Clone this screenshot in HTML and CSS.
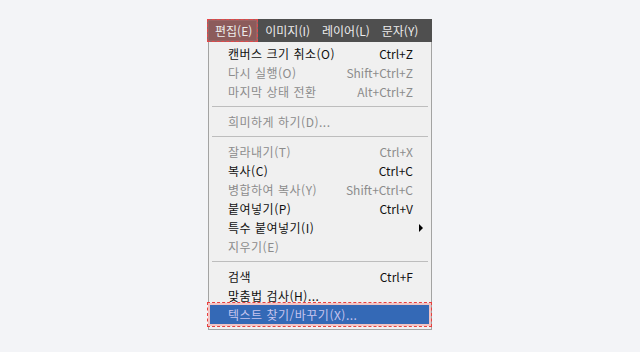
FILE: index.html
```html
<!DOCTYPE html>
<html lang="ko">
<head>
    <meta charset="UTF-8">
    <meta name="viewport" content="width=device-width, initial-scale=1.0">
    <title>편집 메뉴</title>
    <link rel="stylesheet" href="styles.css">
</head>
<body>

    <div class="menu-wrap">
        <div class="menubar">
            <span class="menubar-item active">편집(E)</span>
            <span class="menubar-item">이미지(I)</span>
            <span class="menubar-item">레이어(L)</span>
            <span class="menubar-item">문자(Y)</span>
        </div>

        <ul class="menu">
            <li class="item"><span class="label">캔버스 크기 취소(O)</span><span class="key">Ctrl+Z</span></li>
            <li class="item disabled"><span class="label">다시 실행(O)</span><span class="key">Shift+Ctrl+Z</span></li>
            <li class="item disabled"><span class="label">마지막 상태 전환</span><span class="key">Alt+Ctrl+Z</span></li>
            <li class="sep"></li>
            <li class="item disabled"><span class="label">희미하게 하기(D)...</span></li>
            <li class="sep"></li>
            <li class="item disabled"><span class="label">잘라내기(T)</span><span class="key">Ctrl+X</span></li>
            <li class="item"><span class="label">복사(C)</span><span class="key">Ctrl+C</span></li>
            <li class="item disabled"><span class="label">병합하여 복사(Y)</span><span class="key">Shift+Ctrl+C</span></li>
            <li class="item"><span class="label">붙여넣기(P)</span><span class="key">Ctrl+V</span></li>
            <li class="item has-sub"><span class="label">특수 붙여넣기(I)</span><span class="arrow"></span></li>
            <li class="item disabled"><span class="label">지우기(E)</span></li>
            <li class="sep"></li>
            <li class="item"><span class="label">검색</span><span class="key">Ctrl+F</span></li>
            <li class="item"><span class="label">맞춤법 검사(H)...</span></li>
            <li class="item selected"><span class="label">텍스트 찾기/바꾸기(X)...</span></li>
        </ul>
    </div>

</body>
</html>
```

FILE: styles.css
```css
/* Page */
body {
    margin: 0;
    background-color: #f3f4f7;
    font-family: "Noto Sans CJK KR", "Liberation Sans", sans-serif;
    font-size: 12px;
    color: #111;
}
.menu-wrap {
    width: 225px;
    margin: 19px 0 0 207px;
}
/* Top menu bar */
.menubar {
    display: flex;
    height: 23px;
    background: #4f4f4f;
}
.menubar-item {
    display: flex;
    align-items: center;
    flex-shrink: 0;
    white-space: nowrap;
    padding: 0 5px 0 7px;
    color: #ececec;
}
.menubar-item.active {
    padding: 0 6px 0 8px;
    background: #8c5b5b;
    outline: 1px dashed #e5484a;
    outline-offset: -1px;
    box-shadow: inset 0 0 0 2px #9a6464;
}
/* Dropdown */
.menu {
    list-style: none;
    margin: 0 0 0 1px;
    padding: 2px 2px 5px 1px;
    background: #f0f0f0;
    border: 1px solid #a3a3a3;
    border-top: none;
}
.item {
    display: flex;
    justify-content: space-between;
    align-items: center;
    height: 19px;
    padding: 0 16px 0 18px;
    white-space: nowrap;
}
.label {
    letter-spacing: 0.5px;
}
.item.disabled {
    color: #8c8c8c;
}
.item.selected {
    background: #3469b6;
    color: #c6c4ee;
    outline: 1px dashed #e8403f;
    outline-offset: 2px;
    box-shadow: 0 0 0 2px #f2c4c4;
}
.sep {
    height: 11px;
    display: flex;
    align-items: center;
    padding: 0 1px 0 2px;
}
.sep::before {
    content: "";
    flex: 1;
    border-top: 1px solid #bdbdbd;
}
.arrow {
    width: 0;
    height: 0;
    margin-right: -10px;
    border-left: 4px solid #000;
    border-top: 4px solid transparent;
    border-bottom: 4px solid transparent;
}
```
